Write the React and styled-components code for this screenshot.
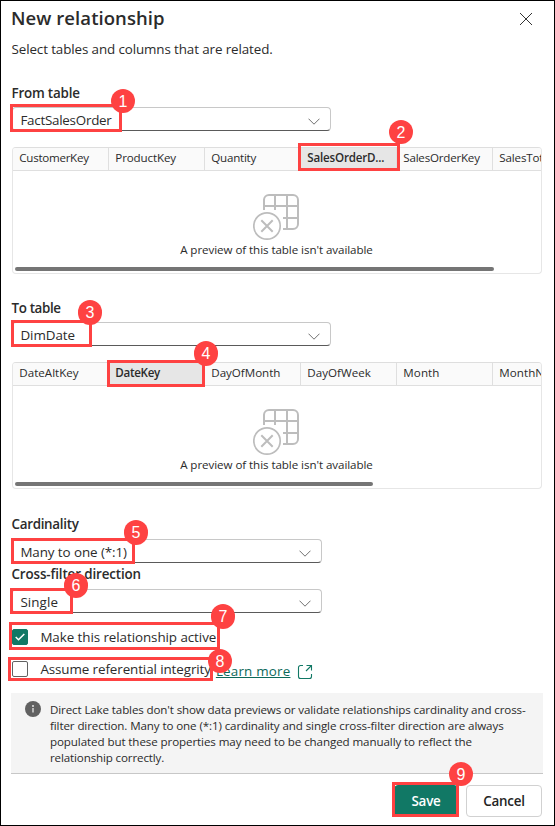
import React from "react";
import styled, { createGlobalStyle } from "styled-components";

const GlobalStyle = createGlobalStyle`
  * { box-sizing: border-box; }
  body { margin: 0; background: #fff; }
`;

const Dialog = styled.div`
  position: relative;
  width: 555px;
  height: 826px;
  padding: 0 12px 0 11px;
  border: 1px solid #000;
  background: #fff;
  color: #2b2b2b;
  font-family: "Open Sans", "Noto Sans", sans-serif;
  overflow: hidden;
`;

const Text = styled.span`
  display: block;
  flex: none;
  white-space: nowrap;
  font-size: ${(p) => p.$size || 13.4}px;
  line-height: ${(p) => p.$line || 20}px;
  font-weight: ${(p) => (p.$bold ? 600 : 400)};
  letter-spacing: ${(p) => p.$ls || 0}px;
`;

const Header = styled.header`
  display: flex;
  justify-content: space-between;
  align-items: flex-start;
  height: 38px;
  margin-left: -1px;
  padding-top: 5px;
`;

const CloseButton = styled.button`
  display: flex;
  margin: 6px 9px 0 0;
  padding: 0;
  border: 0;
  background: none;
`;

const Intro = styled.div`
  height: 44px;
  margin-left: -0.5px;
`;

const Field = styled.section`
  height: ${(p) => p.$height}px;
`;

const FieldLabel = styled(Text)`
  margin-left: -0.5px;
`;

const SelectBox = styled.div`
  display: flex;
  align-items: center;
  justify-content: space-between;
  width: ${(p) => p.$width}px;
  height: 24px;
  margin-top: ${(p) => p.$gap}px;
  padding: 1px 10px 0 7.4px;
  border: 1px solid #c8c8c8;
  border-bottom-color: #5a5a5a;
  border-radius: 4px;

  svg {
    margin-top: 4px;
  }
`;

const Table = styled.div`
  display: flex;
  flex-direction: column;
  width: 530px;
  height: 127px;
  margin-top: 16px;
  border: 1px solid #e6e6e6;
  border-top-color: #dedede;
  border-radius: 4px;
  overflow: hidden;
`;

const Columns = styled.div`
  display: flex;
  flex: none;
  height: 23px;
  background: #fafafa;
  border-bottom: 1px solid #dfdfdf;
`;

const Column = styled.div`
  flex: none;
  width: 96px;
  padding-left: 6.3px;
  border-right: 1px solid #dfdfdf;
  background: ${(p) => (p.$selected ? "#e6e6e6" : "transparent")};
`;

const Empty = styled.div`
  display: flex;
  flex-direction: column;
  align-items: center;
  flex: 1;
  padding: 23px 1px 0 0;

  svg {
    flex: none;
    margin: 0 1px 1px 0;
  }
`;

const ScrollThumb = styled.div`
  flex: none;
  width: ${(p) => p.$width}px;
  height: 4px;
  margin: 0 0 2px 2px;
  border-radius: 2px;
  background: #757575;
`;

const Option = styled.label`
  display: flex;
  align-items: center;
  height: 32px;
`;

const Check = styled.span`
  display: flex;
  align-items: center;
  justify-content: center;
  width: 16px;
  height: 16px;
  margin-right: 12.4px;
  border: 1px solid ${(p) => (p.$on ? "#117865" : "#616161")};
  border-radius: 2px;
  background: ${(p) => (p.$on ? "#117865" : "#fff")};
`;

const Link = styled.a`
  display: flex;
  align-items: center;
  gap: 7px;
  margin: 6px 0 0 5px;
  color: #0c695a;
`;

const LinkText = styled(Text)`
  margin-top: -3px;
  text-decoration: underline;
  text-decoration-thickness: 1px;
  text-decoration-skip-ink: none;
  text-underline-offset: 1px;
`;

const Notice = styled.div`
  display: flex;
  gap: 9px;
  width: 532px;
  height: 81px;
  margin: 8px 0 0 -1px;
  padding: 8px 0 0 14px;
  background: #f4f4f4;
  border-bottom: 1px solid #c7c7c7;
`;

const NoticeText = styled.div`
  padding-top: 1px;
`;

const Footer = styled.footer`
  display: flex;
  justify-content: flex-end;
  gap: 8px;
  margin-top: 11px;
`;

const Button = styled.button`
  display: flex;
  align-items: center;
  justify-content: center;
  width: ${(p) => p.$width}px;
  height: 32px;
  padding: 0;
  border: 1px solid ${(p) => (p.$primary ? "#117865" : "#d1d1d1")};
  border-radius: 4px;
  background: ${(p) => (p.$primary ? "#117865" : "#fff")};
  color: ${(p) => (p.$primary ? "#fff" : "#242424")};
  font-family: inherit;
`;

const Highlight = styled.div`
  position: absolute;
  left: ${(p) => p.$x - 1}px;
  top: ${(p) => p.$y - 1}px;
  width: ${(p) => p.$w}px;
  height: ${(p) => p.$h}px;
  border: 3px solid #fe4242;
`;

const Badge = styled.div`
  position: absolute;
  left: ${(p) => p.$x - 13.3}px;
  top: ${(p) => p.$y - 13.3}px;
  width: 24.6px;
  height: 24.6px;
  border-radius: 50%;
  background: #fe4242;
  color: #fff;
  text-align: center;
  font: 16px/26px "Liberation Sans", sans-serif;
`;

const Chevron = () => (
  <svg width="12" height="7" viewBox="0 0 12 7" fill="none" stroke="#707070">
    <path d="M0.5 0.7 6 6.2 11.5 0.7" />
  </svg>
);

const NoPreviewIcon = () => (
  <svg width="46" height="47" viewBox="0 0 46 47" fill="none" stroke="#bdbdbd" strokeWidth="2">
    <path d="M11 16V6a5 5 0 0 1 5-5h24a5 5 0 0 1 5 5v24a5 5 0 0 1-5 5H30M11 12H45M30 24H45M22 1V16M34 1V35" />
    <circle cx="14" cy="32" r="13.200" strokeWidth="1.700" />
    <path d="M8.300 26.300 19.700 37.700M19.700 26.300 8.300 37.700" />
  </svg>
);

const Select = ({ value, ls, width = 319, gap = 4 }) => (
  <SelectBox $width={width} $gap={gap}>
    <Text $ls={ls}>{value}</Text>
    <Chevron />
  </SelectBox>
);

const PreviewTable = ({ columns, thumb }) => (
  <Table>
    <Columns>
      {columns.map(([name, ls, selected]) => (
        <Column key={name} $selected={selected}>
          <Text $size={11.6} $line={20} $ls={ls} $bold={selected}>{name}</Text>
        </Column>
      ))}
    </Columns>
    <Empty>
      <NoPreviewIcon />
      <Text $size={11.6} $line={15} $ls={-0.07}>A preview of this table isn't available</Text>
    </Empty>
    <ScrollThumb $width={thumb} />
  </Table>
);

const fromColumns = [
  ["CustomerKey", -0.28], ["ProductKey", -0.13], ["Quantity", -0.24],
  ["SalesOrderD...", -0.2, true], ["SalesOrderKey", -0.22], ["SalesTotal", -0.15],
];
const toColumns = [
  ["DateAltKey", 0], ["DateKey", -0.3, true], ["DayOfMonth", -0.03],
  ["DayOfWeek", 0.02], ["Month", 0.09], ["MonthName", 0.05],
];
const noticeLines = [
  ["Direct Lake tables don't show data previews or validate relationships cardinality and cross-", -0.13],
  ["filter direction. Many to one (*:1) cardinality and single cross-filter direction are always", -0.11],
  ["populated but these properties may need to be changed manually to reflect the", -0.1],
  ["relationship correctly.", -0.14],
];
const steps = [
  [10, 104, 112, 28, 123, 101], [298, 143, 102, 28, 401, 132],
  [11, 320, 81, 27, 90, 312.5], [107, 360, 98, 27, 206, 353.5],
  [11, 538, 124, 26, 136, 532.5], [10, 588, 63, 26, 76, 585.5],
  [9, 622, 211, 28, 223, 616.5], [8, 657, 205, 24, 220, 661],
  [392, 782, 67, 35, 461, 774],
];

export default function App() {
  return (
    <Dialog>
      <GlobalStyle />
      <Header>
        <Text $size={18.5} $line={24} $bold $ls={0.07}>New relationship</Text>
        <CloseButton aria-label="Close">
          <svg width="14" height="14" viewBox="0 0 14 14" stroke="#333" strokeWidth="1">
            <path d="M1 1 13 13M13 1 1 13" />
          </svg>
        </CloseButton>
      </Header>
      <Intro>
        <Text $ls={-0.11}>Select tables and columns that are related.</Text>
      </Intro>
      <Field $height={215}>
        <FieldLabel $bold $ls={-0.2}>From table</FieldLabel>
        <Select value="FactSalesOrder" ls={-0.25} />
        <PreviewTable columns={fromColumns} thumb={479} />
      </Field>
      <Field $height={216}>
        <FieldLabel $bold $ls={-0.36}>To table</FieldLabel>
        <Select value="DimDate" ls={-0.05} />
        <PreviewTable columns={toColumns} thumb={358} />
      </Field>
      <Field $height={50}>
        <FieldLabel $bold $ls={-0.3}>Cardinality</FieldLabel>
        <Select value="Many to one (*:1)" ls={-0.08} width={310} gap={5} />
      </Field>
      <Field $height={57}>
        <FieldLabel $bold $ls={-0.13}>Cross-filter direction</FieldLabel>
        <Select value="Single" ls={0.08} width={310} gap={5} />
      </Field>
      <Option>
        <Check $on>
          <svg width="10" height="8" viewBox="0 0 10 8" fill="none" stroke="#fff" strokeWidth="1.500">
            <path d="M0.700 4 3.500 6.800 9.300 1" />
          </svg>
        </Check>
        <Text $ls={-0.07}>Make this relationship active</Text>
      </Option>
      <Option>
        <Check />
        <Text $ls={-0.09}>Assume referential integrity</Text>
        <Link>
          <LinkText $ls={0.2}>Learn more</LinkText>
          <svg width="16" height="16" viewBox="0 0 16 16" fill="none" stroke="#117865" strokeWidth="1.100">
            <path d="M6 1.500H3.500a2 2 0 0 0-2 2v9a2 2 0 0 0 2 2h9a2 2 0 0 0 2-2V10M9.500 1.500h5v5M14.500 1.500 9 7" />
          </svg>
        </Link>
      </Option>
      <Notice>
        <svg width="16" height="16" viewBox="0 0 16 16">
          <circle cx="8" cy="8" r="8" fill="#616161" />
          <circle cx="8" cy="5" r="0.900" fill="#f4f4f4" />
          <path d="M8 7v4.500" stroke="#f4f4f4" strokeWidth="1.200" />
        </svg>
        <NoticeText>
          {noticeLines.map(([line, ls]) => (
            <Text key={line} $size={11.6} $line={16} $ls={ls}>{line}</Text>
          ))}
        </NoticeText>
      </Notice>
      <Footer>
        <Button $primary $width={64}><Text $bold $ls={-0.26}>Save</Text></Button>
        <Button $width={76}><Text $bold $ls={-0.23}>Cancel</Text></Button>
      </Footer>
      {steps.map(([x, y, w, h, cx, cy], i) => (
        <React.Fragment key={i}>
          <Highlight $x={x} $y={y} $w={w} $h={h} />
          <Badge $x={cx} $y={cy}>{i + 1}</Badge>
        </React.Fragment>
      ))}
    </Dialog>
  );
}
